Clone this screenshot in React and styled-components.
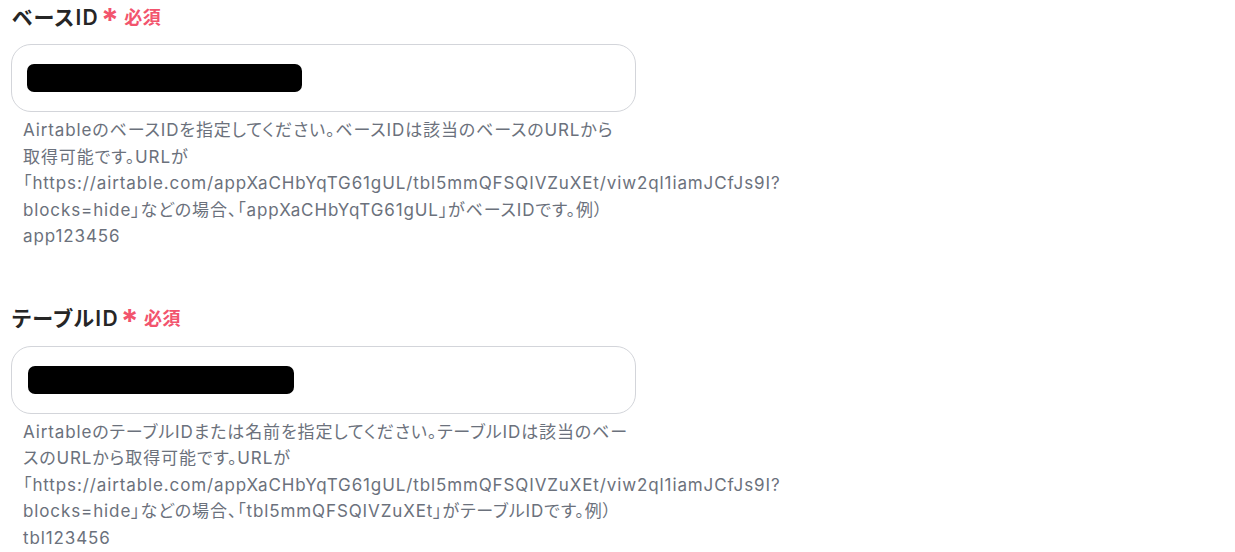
import React from "react";
import styled, { createGlobalStyle } from "styled-components";

const Global = createGlobalStyle`
  html, body { margin: 0; padding: 0; background: #ffffff; }
  body {
    font-family: Inter, "Noto Sans CJK JP", sans-serif;
    font-feature-settings: "palt";
  }
`;

const Page = styled.div`
  padding: 1px 0 0 11px;
  display: flex;
  flex-direction: column;
  gap: 53px;
`;

const Field = styled.section`
  width: 625px;
  display: flex;
  flex-direction: column;
`;

const Label = styled.div`
  display: flex;
  align-items: center;
  height: 29px;
  padding-left: 1px;
  font-size: 21px;
  font-weight: 600;
  color: #262626;
  letter-spacing: 0.06em;
`;

const Asterisk = styled.span`
  color: #f2546d;
  font-size: 32px;
  font-weight: 700;
  line-height: 1;
  margin: 10px 4px 0 2px;
`;

const Required = styled.span`
  color: #f2546d;
  font-size: 18px;
  font-weight: 700;
  letter-spacing: 0.03em;
`;

const InputBox = styled.div`
  margin-top: 14px;
  height: 68px;
  box-sizing: border-box;
  border: 1px solid #d3d5da;
  border-radius: 20px;
  display: flex;
  align-items: center;
  padding-left: ${(p) => p.$pad}px;
`;

const Redaction = styled.div`
  width: ${(p) => p.$w}px;
  height: 28px;
  background: #000;
  border-radius: 7px;
`;

const Help = styled.p`
  margin: 5px 0 0;
  padding: 0 7px 0 12px;
  font-size: 17px;
  line-height: 26.5px;
  letter-spacing: 0.052em;
  color: #6b717c;
`;

export default function App() {
  return (
    <>
      <Global />
      <Page>
        <Field>
          <Label>
            ベースID<Asterisk>*</Asterisk>
            <Required>必須</Required>
          </Label>
          <InputBox $pad={15}>
            <Redaction $w={275} />
          </InputBox>
          <Help>
            AirtableのベースIDを指定してください。ベースIDは該当のベースのURLから取得可能です。URLが
            <br />
            「https://airtable.com/appXaCHbYqTG61gUL/tbl5mmQFSQIVZuXEt/viw2ql1iamJCfJs9I?blocks=hide」などの場合、「appXaCHbYqTG61gUL」がベースIDです。例）app123456
          </Help>
        </Field>
        <Field>
          <Label>
            テーブルID<Asterisk>*</Asterisk>
            <Required>必須</Required>
          </Label>
          <InputBox $pad={16}>
            <Redaction $w={266} />
          </InputBox>
          <Help>
            AirtableのテーブルIDまたは名前を指定してください。テーブルIDは該当のベースのURLから取得可能です。URLが
            <br />
            「https://airtable.com/appXaCHbYqTG61gUL/tbl5mmQFSQIVZuXEt/viw2ql1iamJCfJs9I?blocks=hide」などの場合、「tbl5mmQFSQIVZuXEt」がテーブルIDです。例）tbl123456
          </Help>
        </Field>
      </Page>
    </>
  );
}
